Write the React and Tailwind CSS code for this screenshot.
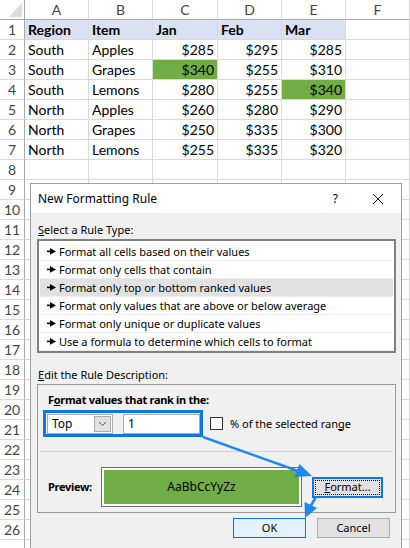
import React from "react";

const colW = ["w-[64px]", "w-[64px]", "w-[65px]", "w-[64px]", "w-[64px]", "w-[64px]"];
const letters = ["A", "B", "C", "D", "E", "F"];

const data = [
  ["Region", "Item", "Jan", "Feb", "Mar"],
  ["South", "Apples", "$285", "$295", "$285"],
  ["South", "Grapes", "$340", "$255", "$310"],
  ["South", "Lemons", "$280", "$255", "$340"],
  ["North", "Apples", "$260", "$280", "$290"],
  ["North", "Grapes", "$250", "$335", "$300"],
  ["North", "Lemons", "$255", "$335", "$320"],
];

const green = { "3-2": true, "4-4": true };

function Sheet() {
  const rows = [];
  for (let r = 1; r <= 27; r++) rows.push(r);
  return (
    <div className="font-['Lato',sans-serif] text-[14px] text-black">
      <div className="flex h-[20px]">
        <div className="w-[25px] shrink-0 border-r border-b border-[#a9a9a9] flex items-end justify-end pr-[2px] pb-[2px]">
          <svg width="13" height="14" viewBox="0 0 13 14">
            <polygon points="13,0 13,14 0,14" fill="#dcdcdc" />
          </svg>
        </div>
        {letters.map((l, i) => (
          <div
            key={l}
            className={`${colW[i]} shrink-0 flex items-center justify-center border-r border-b border-r-[#d9d9d9] border-b-[#a9a9a9] text-[#444] text-[14px]`}
          >
            {l}
          </div>
        ))}
      </div>
      {rows.map((r) => (
        <div key={r} className="flex h-[20px]">
          <div className="w-[25px] shrink-0 flex items-center justify-center border-r border-b border-r-[#a9a9a9] border-b-[#d9d9d9] text-[#444] text-[14px]">
            {r < 27 ? r : ""}
          </div>
          {letters.map((l, i) => {
            const row = data[r - 1];
            const val = row && i < 5 ? row[i] : "";
            const isHead = r === 1 && i < 5;
            const isNum = r > 1 && i >= 2;
            const isGreen = green[`${r}-${i}`];
            return (
              <div
                key={l}
                className={`${colW[i]} shrink-0 flex items-center border-r border-b border-[#d9d9d9] leading-none ${
                  isNum ? "justify-end pr-[3px]" : "justify-start pl-[3px]"
                } ${isHead ? "bg-[#d9e1f2] font-bold" : ""} ${isGreen ? "bg-[#70ad47]" : ""}`}
              >
                {val}
              </div>
            );
          })}
        </div>
      ))}
    </div>
  );
}

function ItemArrow() {
  return (
    <svg width="9" height="7" viewBox="0 0 9 7" className="shrink-0">
      <rect x="0" y="2.6" width="4" height="1.6" fill="#000" />
      <polygon points="3,0 9,3.4 3,6.8" fill="#000" />
    </svg>
  );
}

const ruleItems = [
  "Format all cells based on their values",
  "Format only cells that contain",
  "Format only top or bottom ranked values",
  "Format only values that are above or below average",
  "Format only unique or duplicate values",
  "Use a formula to determine which cells to format",
];

function Dialog() {
  return (
    <div className="absolute left-[30px] top-[183px] w-[372px] h-[380px] border border-[#a0a0a0] bg-[#f0f0f0] font-['Noto_Sans',sans-serif] text-[11px] text-black leading-[16px]">
      {/* title bar */}
      <div className="h-[29px] bg-white flex items-center pl-[7px]">
        <span className="text-[12px]">New Formatting Rule</span>
        <span className="ml-auto text-[12px]">?</span>
        <svg width="12" height="12" viewBox="0 0 12 12" className="ml-[34px] mr-[17px]">
          <path d="M1 1 L11 11 M11 1 L1 11" stroke="#000" strokeWidth="1" />
        </svg>
      </div>
      {/* body */}
      <div className="pl-[6px] pt-[9px]">
        <div className="pl-[1px] h-[16px]">
          <span className="underline">S</span>elect a Rule Type:
        </div>
        <div className="mt-[1px] w-[359px] h-[114px] border-2 border-[#808080] bg-white pt-[2px] px-[1px]">
          {ruleItems.map((t, i) => (
            <div
              key={t}
              className={`h-[18px] flex items-center border-b border-[#ededed] pl-[7px] ${
                i === 2 ? "bg-[#e1e1e1]" : ""
              }`}
            >
              <ItemArrow />
              <span className="ml-[3px]">{t}</span>
            </div>
          ))}
        </div>
        <div className="mt-[14px] pl-[1px] h-[16px]">
          <span className="underline">E</span>dit the Rule Description:
        </div>
        <div className="mt-[1px] w-[359px] h-[129px] border border-[#9a9a9a] flex flex-col">
          <div className="mt-[7px] ml-[10px] h-[16px] font-bold tracking-[-0.3px]">
            F<span className="underline">o</span>rmat values that rank in the:
          </div>
          <div className="mt-[2px] flex items-center">
            <div className="ml-[5px] w-[160px] h-[27px] border-[3px] border-[#0b78e3] flex items-center pl-[1px]">
              <div className="w-[66px] h-[20px] border border-[#adadad] bg-white flex items-center pl-[4px]">
                <span className="text-[12px]">Top</span>
                <div className="ml-auto mr-[1px] w-[17px] h-[16px] bg-[#e1e1e1] border border-[#adadad] flex items-center justify-center">
                  <svg width="9" height="6" viewBox="0 0 9 6">
                    <path d="M1 1 L4.5 4.5 L8 1" stroke="#555" strokeWidth="1" fill="none" />
                  </svg>
                </div>
              </div>
              <div className="ml-[10px] w-[77px] h-[20px] border border-[#adadad] bg-white flex items-center pl-[4px] text-[12px]">
                1
              </div>
            </div>
            <div className="ml-[7px] w-[13px] h-[13px] border border-[#333] bg-white" />
            <span className="ml-[7px]">
              % of the selected ran<span className="underline">g</span>e
            </span>
          </div>
          <div className="mt-[14px] ml-[2px] w-[353px] h-px bg-[#d2d2d2]" />
          <div className="mt-[15px] flex items-center">
            <div className="ml-[10px] w-[53px] font-bold tracking-[-0.3px]">Preview:</div>
            <div className="w-[201px] h-[40px] border border-[#6e6e6e] bg-white p-[2px]">
              <div className="w-full h-full bg-[#70ad47] flex items-center justify-center text-[12px]">
                AaBbCcYyZz
              </div>
            </div>
            <div className="ml-[10px] w-[71px] h-[21px] border-2 border-[#0b78e3] bg-[#e1e1e1] p-[1px]">
              <div className="w-full h-full border border-dotted border-black flex items-center justify-center">
                <span>
                  <span className="underline">F</span>ormat...
                </span>
              </div>
            </div>
          </div>
        </div>
        <div className="mt-[5px] flex w-[359px]">
          <div className="ml-[196px] w-[73px] h-[20px] border border-[#0078d7] bg-[#e5f1fb] flex items-center justify-center">
            OK
          </div>
          <div className="ml-[11px] w-[73px] h-[20px] border border-[#adadad] bg-[#e1e1e1] flex items-center justify-center">
            Cancel
          </div>
        </div>
      </div>
    </div>
  );
}

function Arrows() {
  return (
    <svg className="absolute left-0 top-0 pointer-events-none" width="410" height="548" viewBox="0 0 410 548">
      <line x1="203" y1="437" x2="298" y2="471" stroke="#1e88f0" strokeWidth="2.5" />
      <polygon points="312,476 294.5,477 299.5,464" fill="#1e88f0" />
      <line x1="316" y1="497" x2="310" y2="507" stroke="#1e88f0" strokeWidth="2.5" />
      <polygon points="305,518 304.5,502 317,508" fill="#1e88f0" />
    </svg>
  );
}

export default function App() {
  return (
    <div className="relative w-[410px] h-[548px] overflow-hidden bg-white">
      <Sheet />
      <Dialog />
      <Arrows />
    </div>
  );
}
